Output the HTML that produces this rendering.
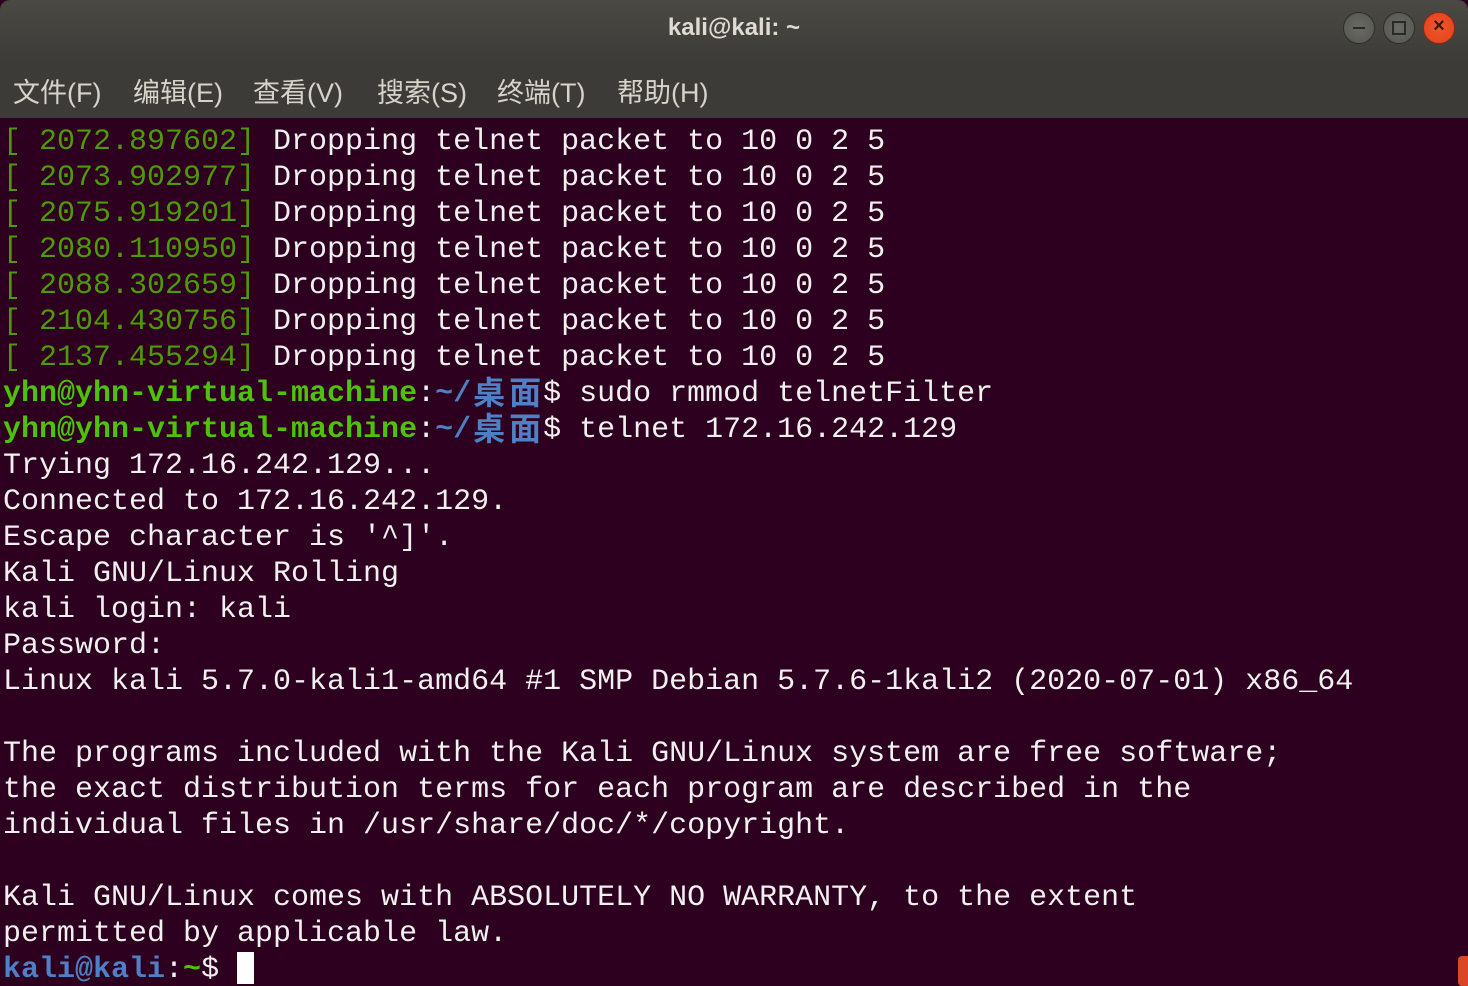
<!DOCTYPE html>
<html><head><meta charset="utf-8"><style>
*{margin:0;padding:0;box-sizing:border-box}
html,body{width:1468px;height:986px;overflow:hidden}
body{background:#2c001e;position:relative}
#title{position:absolute;left:0;top:0;width:1468px;height:60px;background:linear-gradient(#4a4944,#3d3c38);border-radius:10px 10px 0 0}
#title .t{position:absolute;left:0;right:0;top:14px;text-align:center;font:bold 24px "Liberation Sans",sans-serif;color:#dfdbd2}
.btn{position:absolute;top:12px;width:32px;height:32px;border-radius:50%;background:radial-gradient(#6a6a66,#55554f);border:1px solid #2e2e2b}
#menu{position:absolute;left:0;top:60px;width:1468px;height:58px;background:#3c3b37}
#menu span{position:absolute;top:11px;font:27px "Liberation Sans","Noto Sans CJK SC",sans-serif;color:#d6d3cb}
#term{position:absolute;left:3px;top:124px;font:30px "Liberation Mono","Noto Sans CJK SC",monospace;color:#f0f0f0}
.l{height:36px;line-height:36px;white-space:pre;overflow:hidden}
.g{color:#4e9a06}
.p{color:#4ec20a;font-weight:bold}
.b{color:#4f7fc4;font-weight:bold}
.c{display:inline-block;width:36px;text-align:center;font-family:"Noto Sans CJK SC",sans-serif;font-size:32px;line-height:32px;vertical-align:top;position:relative;top:-1px}
.tg{color:#4ec20a;font-weight:bold}
</style></head><body>
<div id="title"><div class="t">kali@kali: ~</div>
<div class="btn" style="left:1343px"><div style="position:absolute;left:9px;top:14px;width:12px;height:2px;background:#2a2a28"></div></div>
<div class="btn" style="left:1383px"><div style="position:absolute;left:8px;top:8px;width:14px;height:14px;border:2px solid #2a2a28"></div></div>
<div class="btn" style="left:1423px;background:radial-gradient(#f2552b,#e0421b);border-color:#8a2a14"><div style="position:absolute;left:0;top:2px;width:30px;text-align:center;font:bold 20px 'Liberation Sans',sans-serif;color:#3a1a10">×</div></div>
</div>
<div id="menu">
<span style="left:13px">文件(F)</span><span style="left:133px">编辑(E)</span><span style="left:253px">查看(V)</span><span style="left:377px">搜索(S)</span><span style="left:497px">终端(T)</span><span style="left:617px">帮助(H)</span>
</div>
<div id="term"><div class="l"><span class="g">[ 2072.897602]</span> Dropping telnet packet to 10 0 2 5</div><div class="l"><span class="g">[ 2073.902977]</span> Dropping telnet packet to 10 0 2 5</div><div class="l"><span class="g">[ 2075.919201]</span> Dropping telnet packet to 10 0 2 5</div><div class="l"><span class="g">[ 2080.110950]</span> Dropping telnet packet to 10 0 2 5</div><div class="l"><span class="g">[ 2088.302659]</span> Dropping telnet packet to 10 0 2 5</div><div class="l"><span class="g">[ 2104.430756]</span> Dropping telnet packet to 10 0 2 5</div><div class="l"><span class="g">[ 2137.455294]</span> Dropping telnet packet to 10 0 2 5</div><div class="l"><span class="p">yhn@yhn-virtual-machine</span>:<span class="b">~/<span class="c">桌</span><span class="c">面</span></span>$ sudo rmmod telnetFilter</div><div class="l"><span class="p">yhn@yhn-virtual-machine</span>:<span class="b">~/<span class="c">桌</span><span class="c">面</span></span>$ telnet 172.16.242.129</div><div class="l">Trying 172.16.242.129...</div><div class="l">Connected to 172.16.242.129.</div><div class="l">Escape character is '^]'.</div><div class="l">Kali GNU/Linux Rolling</div><div class="l">kali login: kali</div><div class="l">Password:</div><div class="l">Linux kali 5.7.0-kali1-amd64 #1 SMP Debian 5.7.6-1kali2 (2020-07-01) x86_64</div><div class="l"> </div><div class="l">The programs included with the Kali GNU/Linux system are free software;</div><div class="l">the exact distribution terms for each program are described in the</div><div class="l">individual files in /usr/share/doc/*/copyright.</div><div class="l"> </div><div class="l">Kali GNU/Linux comes with ABSOLUTELY NO WARRANTY, to the extent</div><div class="l">permitted by applicable law.</div><div class="l"><span class="b">kali@kali</span>:<span class="tg">~</span>$ <span style="display:inline-block;width:17px;height:34px;background:#fff;vertical-align:top;position:relative;top:-2px"></span></div></div>
<div style="position:absolute;left:1458px;top:956px;width:10px;height:30px;background:#d9472a;border-radius:4px 0 0 4px"></div>
</body></html>
